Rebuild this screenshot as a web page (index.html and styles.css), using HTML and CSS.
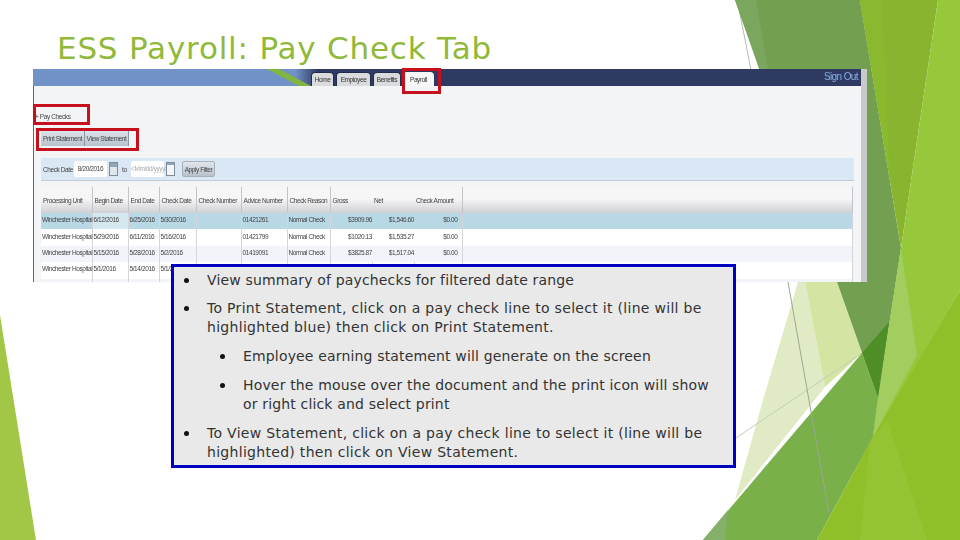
FILE: index.html
```html
<!DOCTYPE html>
<html lang="en">
  <head>
    <meta charset="UTF-8" />
    <title>ESS Payroll: Pay Check Tab</title>
    <link rel="stylesheet" href="styles.css">
  </head>
  <body>
    <div class="slide">
      <!-- Background facets -->
      <svg class="facets" width="960" height="540" viewBox="0 0 960 540">
        <polygon points="0,315 36,540 0,540" fill="#a2c747" />
        <line x1="738" y1="4" x2="751" y2="70" stroke="#b9bdb4" />
        <polygon points="798,282 805,282 825,387 735,500 763,400" fill="#e0ebc5" />
        <polygon points="805,282 837,282 862,353 825,387" fill="#d3e4a3" />
        <line x1="736" y1="438" x2="862" y2="353" stroke="#c3cdb6" />
        <polygon points="735,0 860,0 901,248 878,398 837,282 770,100" fill="#729f50" />
        <polygon points="735,0 756,0 768,69 760,69" fill="#7aa65e" />
        <polygon points="860,0 938,0 901,248" fill="#88b42f" />
        <polygon points="860,0 882,0 890,180" fill="#8ab92f" />
        <polygon points="938,0 960,0 960,290 814,540 873,437 878,398 901,248" fill="#97c83c" />
        <polygon points="901,248 917,355 873,437 878,398" fill="#a2cd5f" />
        <polygon points="862,353 889,322 878,398" fill="#4f8d26" />
        <polygon points="703,540 862,353 878,398 873,437 817,540" fill="#79b04a" />
        <polygon points="703,540 728,510 725,540" fill="#84b068" />
        <line x1="788" y1="282" x2="829" y2="513" stroke="#9aa892" />
        <polygon points="960,290 960,540 817,540 873,437" fill="#8fc02a" />
        <polygon points="860,540 870,443 887,420 927,540" fill="#94c434" />
      </svg>

      <h1 class="title">ESS Payroll: Pay Check Tab</h1>

      <!-- Screenshot of the ESS page -->
      <div class="shot">
        <div class="app">
          <div class="app-main">
            <div class="topbar">
              <svg class="swoosh" width="44" height="17" viewBox="0 0 44 17">
                <polygon points="0,0 12,0 44,17 32,17" fill="#82b540" />
              </svg>
              <div class="tabs">
                <span class="tab tab-home">Home</span>
                <span class="tab tab-emp">Employee</span>
                <span class="tab tab-ben">Benefits</span>
                <span class="tab tab-on">Payroll</span>
              </div>
              <span class="signout">Sign Out</span>
            </div>
            <div class="content">
              <div class="crumb">+ Pay Checks</div>
              <div class="actions">
                <span class="action">Print Statement</span>
                <span class="action">View Statement</span>
              </div>
              <div class="filter">
                <span class="filter-label">Check Date</span>
                <span class="field">8/20/2016</span>
                <span class="cal"></span>
                <span class="to">to</span>
                <span class="field field-empty">&lt;Mm/dd/yyyy&gt;</span>
                <span class="cal cal-empty"></span>
                <span class="apply">Apply Filter</span>
              </div>
              <table class="grid">
                <colgroup>
                  <col class="c-unit" /><col class="c-date" /><col class="c-end" /><col class="c-check" />
                  <col class="c-num" /><col class="c-adv" /><col class="c-reason" /><col class="c-gross" />
                  <col class="c-net" /><col class="c-amt" /><col />
                </colgroup>
                <thead>
                  <tr>
                    <th>Processing Unit</th><th>Begin Date</th><th>End Date</th><th>Check Date</th>
                    <th>Check Number</th><th>Advice Number</th><th>Check Reason</th><th class="open">Gross</th>
                    <th class="open net">Net</th><th class="num">Check Amount</th><th></th>
                  </tr>
                </thead>
                <tbody>
                  <tr class="picked">
                    <td>Winchester Hospital</td><td class="cell-on">6/12/2016</td><td>6/25/2016</td><td>5/30/2016</td>
                    <td></td><td>01421261</td><td>Normal Check</td><td class="open val">$3909.96</td>
                    <td class="open val">$1,546.60</td><td class="num">$0.00</td><td></td>
                  </tr>
                  <tr>
                    <td>Winchester Hospital</td><td>5/29/2016</td><td>6/11/2016</td><td>5/16/2016</td>
                    <td></td><td>01421799</td><td>Normal Check</td><td class="open val">$1020.13</td>
                    <td class="open val">$1,535.27</td><td class="num">$0.00</td><td></td>
                  </tr>
                  <tr class="alt">
                    <td>Winchester Hospital</td><td>5/15/2016</td><td>5/28/2016</td><td>5/2/2016</td>
                    <td></td><td>01419091</td><td>Normal Check</td><td class="open val">$3825.87</td>
                    <td class="open val">$1,517.04</td><td class="num">$0.00</td><td></td>
                  </tr>
                  <tr>
                    <td>Winchester Hospital</td><td>5/1/2016</td><td>5/14/2016</td><td>5/1/2016</td>
                    <td></td><td></td><td></td><td></td><td></td><td></td><td></td>
                  </tr>
                  <tr class="alt">
                    <td></td><td></td><td></td><td></td><td></td><td></td><td></td><td></td><td></td><td></td><td></td>
                  </tr>
                </tbody>
              </table>
            </div>
          </div>
          <div class="scrollbar"></div>
        </div>
        <!-- Red call-out boxes -->
        <div class="mark mark-tab"></div>
        <div class="mark mark-crumb"></div>
        <div class="mark mark-actions"></div>
      </div>

      <!-- Notes box -->
      <div class="notes">
        <ul class="points">
          <li>View summary of paychecks for filtered date range</li>
          <li class="wide">To Print Statement, click on a pay check line to select it (line will be highlighted blue) then click on Print Statement.</li>
          <li class="sub">Employee earning statement will generate on the screen</li>
          <li class="sub">Hover the mouse over the document and the print icon will show or right click and select print</li>
          <li class="wide">To View Statement, click on a pay check line to select it (line will be highlighted) then click on View Statement.</li>
        </ul>
      </div>
    </div>
  </body>
</html>
```

FILE: styles.css
```css
body {
  margin: 0;
  background: #ffffff;
  font-family: "DejaVu Sans", sans-serif;
}

.slide {
  position: relative;
  width: 960px;
  height: 540px;
  overflow: hidden;
  padding: 28px 0 0 33px;
  box-sizing: border-box;
}

.facets {
  position: absolute;
  top: 0;
  left: 0;
}

.title {
  position: relative;
  margin: 0 0 0 24px;
  height: 41px;
  line-height: 41px;
  font-size: 31px;
  font-weight: normal;
  letter-spacing: 0.8px;
  color: #90b93a;
  white-space: nowrap;
}

.shot {
  position: relative;
  width: 834px;
  height: 213px;
}

.app {
  display: flex;
  height: 100%;
  overflow: hidden;
  background: #f3f4f6;
  font-family: "Liberation Sans", sans-serif;
  font-size: 6.5px;
  letter-spacing: -0.4px;
  color: #444;
  filter: blur(0.4px);
}

.app-main {
  flex: 1;
  min-width: 0;
}

.scrollbar {
  width: 6px;
  background: #c9c9c9;
}

.topbar {
  position: relative;
  display: flex;
  align-items: flex-end;
  height: 17px;
  background: linear-gradient(90deg, #7092c6 0, #7092c6 262px, #2f3a63 285px);
}

.swoosh {
  position: absolute;
  top: 0;
  left: 234px;
}

.tabs {
  position: relative;
  display: flex;
  gap: 2px;
  margin-left: 278px;
}

.tab {
  height: 14px;
  line-height: 14px;
  box-sizing: border-box;
  text-align: center;
  background: #d9dbdd;
  border: 1px solid #222b4a;
  border-bottom: 0;
  border-radius: 4px 4px 0 0;
  color: #333;
}

.tab-home { width: 23px; }
.tab-emp { width: 35px; }
.tab-ben { width: 28px; }

.tab-on {
  width: 31px;
  background: #f7f7f7;
  border-color: #f7f7f7;
}

.signout {
  margin: 0 3px auto auto;
  font-size: 10px;
  letter-spacing: -0.6px;
  line-height: 16px;
  color: #86aee0;
}

.content {
  height: 196px;
  padding-top: 25px;
  box-sizing: border-box;
  border-left: 1px solid #666;
}

.crumb {
  height: 11px;
  line-height: 11px;
  padding-left: 1px;
}

.actions {
  display: flex;
  margin: 9px 0 0 7px;
}

.action {
  width: 43px;
  height: 15px;
  line-height: 15px;
  text-align: center;
  white-space: nowrap;
  background: linear-gradient(#dde3ea, #b8c2ce);
  border-right: 1px solid #8b96a3;
}

.filter {
  display: flex;
  align-items: center;
  height: 22px;
  margin: 12px 7px 0 7px;
  padding-left: 2px;
  background: #dae8f5;
  border-bottom: 1px solid #c3ccd6;
}

.filter-label {
  width: 31px;
}

.field {
  width: 33px;
  height: 16px;
  line-height: 16px;
  text-align: center;
  background: #fff;
  border-radius: 2px;
}

.field-empty {
  color: #aaa;
}

.cal {
  width: 9px;
  height: 14px;
  margin-left: 2px;
  background: linear-gradient(#8fa5b8 30%, #dfe6ec 30%);
  border: 1px solid #7f8d9a;
  box-sizing: border-box;
}

.cal-empty {
  background: linear-gradient(#8fa5b8 20%, #f3f6f9 20%);
}

.to {
  width: 9px;
  margin-left: 4px;
}

.apply {
  height: 16px;
  line-height: 16px;
  width: 33px;
  margin-left: 7px;
  text-align: center;
  white-space: nowrap;
  background: linear-gradient(#e2e6ec, #b9c2cc);
  border: 1px solid #a8b1bb;
  border-radius: 2px;
  box-sizing: border-box;
}

.grid {
  width: 812px;
  margin: 6px 0 0 7px;
  table-layout: fixed;
  border-collapse: collapse;
  border-right: 1px solid #9a9ea6;
}

.c-unit { width: 51px; }
.c-date { width: 36px; }
.c-end { width: 31px; }
.c-check { width: 37px; }
.c-num { width: 45px; }
.c-adv { width: 46px; }
.c-reason { width: 43px; }
.c-gross { width: 42px; }
.c-net { width: 42px; }
.c-amt { width: 48px; }

.grid th {
  height: 26px;
  padding: 0 0 0 2px;
  font-weight: normal;
  text-align: left;
  white-space: nowrap;
  background: linear-gradient(#f6f6f7 45%, #cfd0d3);
  border-right: 1px solid #c2c4c8;
}

.grid th.num {
  text-align: right;
  padding-right: 8px;
}

.grid th.net {
  text-align: right;
  padding-right: 31px;
}

.grid td {
  height: 16.4px;
  box-sizing: border-box;
  padding: 0 0 3px 1px;
  white-space: nowrap;
  border-right: 1px solid #d4d6da;
  background: #fff;
}

.grid td.num {
  text-align: right;
  padding-right: 4px;
}

.grid td.val {
  text-align: right;
  padding-right: 0;
}

.grid .open {
  border-right: 0;
}

.grid .alt td {
  background: #f1f4f9;
}

.grid .picked td {
  background: #b8d8e6;
}

.grid .picked td.cell-on {
  background: #d5e7ef;
}

.mark {
  position: absolute;
  box-sizing: border-box;
  border: 3px solid #c8101c;
}

.mark-tab {
  top: -1px;
  left: 369px;
  width: 39px;
  height: 26px;
}

.mark-crumb {
  top: 35px;
  left: 0;
  width: 57px;
  height: 21px;
}

.mark-actions {
  top: 59px;
  left: 3px;
  width: 103px;
  height: 23px;
}

.notes {
  position: absolute;
  top: 264px;
  left: 171px;
  width: 565px;
  height: 204px;
  box-sizing: border-box;
  padding: 4px 24px 0 33px;
  background: #e9e9e9;
  border: 3px solid #0000c0;
  font-size: 14px;
  letter-spacing: 0.16px;
  line-height: 19px;
  color: #333;
}

.points {
  margin: 0;
  padding: 0;
  list-style: none;
}

.points li {
  position: relative;
  margin-bottom: 10px;
}

.points li:first-child {
  margin-bottom: 9px;
}

.points li::before {
  content: "";
  position: absolute;
  top: 7px;
  left: -23px;
  width: 5px;
  height: 5px;
  border-radius: 50%;
  background: #111;
}

.points .sub {
  margin-left: 36px;
}

.points .wide {
  letter-spacing: 0.3px;
}
```
